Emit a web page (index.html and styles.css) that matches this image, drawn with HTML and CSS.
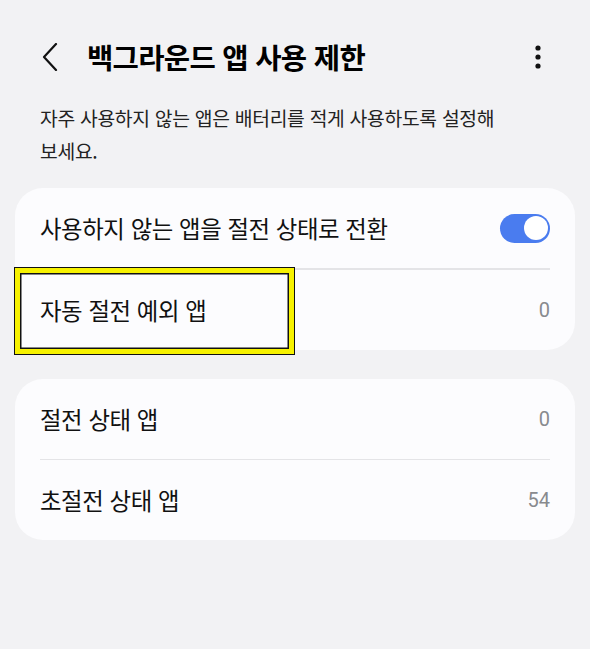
FILE: index.html
```html
<!DOCTYPE html>
<html lang="ko">
<head>
<meta charset="utf-8">
<link rel="stylesheet" href="styles.css">
</head>
<body>
<div class="screen">
  <header class="appbar">
    <svg class="back" width="16" height="28" viewBox="0 0 16 28"><path d="M14 1 L2 14 L14 27" fill="none" stroke="#111" stroke-width="2.2" stroke-linecap="round" stroke-linejoin="round"/></svg>
    <h1 class="title">백그라운드 앱 사용 제한</h1>
    <svg class="more" width="8" height="26" viewBox="0 0 8 26"><circle cx="4" cy="4" r="2.6" fill="#111"/><circle cx="4" cy="13" r="2.6" fill="#111"/><circle cx="4" cy="22" r="2.6" fill="#111"/></svg>
  </header>
  <p class="desc">자주 사용하지 않는 앱은 배터리를 적게 사용하도록 설정해<br>보세요.</p>

  <section class="card">
    <div class="row">
      <span class="label">사용하지 않는 앱을 절전 상태로 전환</span>
      <span class="switch"><span class="knob"></span></span>
    </div>
    <div class="divider"></div>
    <div class="row">
      <span class="label">자동 절전 예외 앱</span>
      <span class="value">0</span>
    </div>
    <div class="highlight"></div>
  </section>

  <section class="card card2">
    <div class="row">
      <span class="label">절전 상태 앱</span>
      <span class="value">0</span>
    </div>
    <div class="divider"></div>
    <div class="row">
      <span class="label">초절전 상태 앱</span>
      <span class="value">54</span>
    </div>
  </section>
</div>
</body>
</html>
```
FILE: styles.css
```css
* { box-sizing: border-box; }
html, body {
  margin: 0;
  padding: 0;
  background: #f2f2f4;
}
body {
  font-family: "Noto Sans CJK KR", "Noto Sans", sans-serif;
  color: #111;
  width: 590px;
  height: 649px;
  overflow: hidden;
}
.appbar {
  height: 102px;
  padding: 12px 0 0 42px;
  display: flex;
  align-items: center;
}
.back { flex: none; }
.title {
  margin: 0 0 0 29px;
  font-size: 28.6px;
  font-weight: 700;
  letter-spacing: -0.7px;
  color: #000;
  flex: 1;
  line-height: 1;
}
.more {
  flex: none;
  margin-right: 48px;
}
.desc {
  margin: 0;
  padding: 0 40px;
  font-size: 19.3px;
  line-height: 33px;
  color: #222;
  letter-spacing: -0.3px;
}
.card {
  position: relative;
  margin: 20px 15px 0;
  background: #fcfcfe;
  border-radius: 28px;
  padding: 0 25px;
}
.card2 { margin-top: 29px; }
.row {
  height: 80px;
  display: flex;
  align-items: center;
  justify-content: space-between;
  position: relative;
  z-index: 1;
}
.label {
  font-size: 23.4px;
  letter-spacing: -0.4px;
  color: #111;
}
.value {
  font-family: "Roboto", "Noto Sans", sans-serif;
  font-size: 20px;
  color: #888a8e;
}
.divider {
  height: 1.5px;
  background: #e4e4e7;
}
.switch {
  width: 50px;
  height: 29px;
  border-radius: 15px;
  background: #4a7cef;
  display: flex;
  align-items: center;
  justify-content: flex-end;
  padding-right: 2.5px;
}
.knob {
  width: 24px;
  height: 24px;
  border-radius: 50%;
  background: #fff;
}
.highlight {
  position: absolute;
  left: -1px;
  top: 79px;
  width: 281px;
  height: 88px;
  background: #fcfcfe;
  border: 6px solid #f7f200;
  outline: 1.5px solid #111;
  outline-offset: -1.5px;
  box-shadow: inset 0 0 0 1.5px #111;
  z-index: 0;
}
```
